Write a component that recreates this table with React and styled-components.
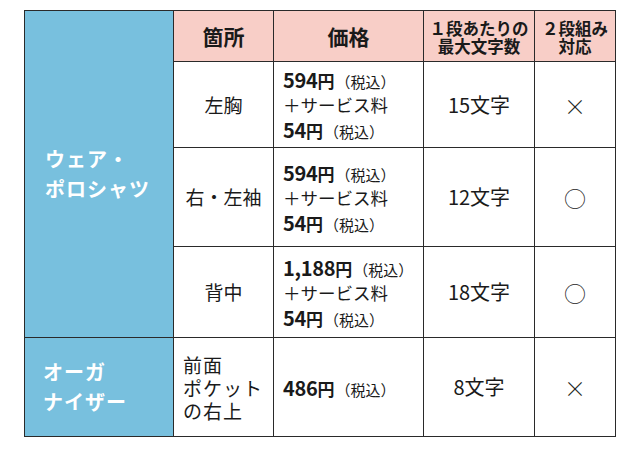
import React from "react";
import styled, { createGlobalStyle } from "styled-components";

const Global = createGlobalStyle`
  html, body { margin: 0; padding: 0; background: #fff; }
  body { font-family: "Noto Sans CJK JP", "Noto Sans", sans-serif; color: #1a1a1a; }
`;

const Page = styled.div`
  padding: 10px 0 0 24px;
`;

const Table = styled.div`
  display: grid;
  width: max-content;
  grid-template-columns: 148px 99px 149px 110px 80px;
  grid-template-rows: 50px 85px 98px 90px 98px;
  gap: 1px;
  padding: 1px;
  background: #2a2a2a;
`;

const GroupCell = styled.div`
  grid-column: 1;
  grid-row: ${(p) => p.$rows};
  background: #78c0de;
  color: #fff;
  font-weight: 700;
  font-size: 20px;
  line-height: 30px;
  letter-spacing: 1px;
  display: flex;
  flex-direction: column;
  justify-content: center;
  padding-left: ${(p) => p.$pad}px;
`;

const HeaderCell = styled.div`
  background: #f8cec7;
  display: flex;
  flex-direction: column;
  align-items: center;
  justify-content: center;
  font-weight: 700;
  font-size: ${(p) => (p.$small ? 16.5 : 21)}px;
  line-height: ${(p) => (p.$small ? "18px" : "24px")};
  color: #1a1a1a;
  text-align: center;
  white-space: nowrap;
  padding-top: ${(p) => (p.$small ? 1 : 0)}px;
`;

const Cell = styled.div`
  background: #fff;
  display: flex;
  flex-direction: column;
  justify-content: center;
  align-items: ${(p) => (p.$left ? "flex-start" : "center")};
  padding-left: ${(p) => (p.$left ? 9 : 0)}px;
  font-size: ${(p) => p.$size || 20}px;
  line-height: ${(p) => p.$lh || 24}px;
  white-space: nowrap;
`;

const PlaceText = styled.span`
  font-size: 19px;
  line-height: 23px;
  letter-spacing: 1px;
`;

const PriceLine = styled.div`
  display: flex;
  align-items: baseline;
  height: 25px;
  line-height: 25px;
`;

const Amount = styled.span`
  font-weight: 700;
  font-size: 20px;
  letter-spacing: -0.3px;
`;

const Yen = styled.span`
  font-weight: 700;
  font-size: 17px;
`;

const Tax = styled.span`
  font-size: 15px;
  margin-left: 1px;
`;

const Service = styled.span`
  font-size: 17.5px;
`;

const Mark = styled.span`
  font-size: 22px;
  font-weight: 300;
  color: #222;
`;

const Price = ({ amount }) => (
  <PriceLine>
    <Amount>{amount}</Amount>
    <Yen>円</Yen>
    <Tax>（税込）</Tax>
  </PriceLine>
);

const PriceBlock = ({ amount }) => (
  <>
    <Price amount={amount} />
    <PriceLine>
      <Service>＋サービス料</Service>
    </PriceLine>
    <Price amount="54" />
  </>
);

const rows = [
  { place: "左胸", price: "594", chars: "15文字", mark: "×" },
  { place: "右・左袖", price: "594", chars: "12文字", mark: "○" },
  { place: "背中", price: "1,188", chars: "18文字", mark: "○" },
];

export default function App() {
  return (
    <>
      <Global />
      <Page>
        <Table>
          <GroupCell $rows="1 / span 4" $pad={20}>
            <span>ウェア・</span>
            <span>ポロシャツ</span>
          </GroupCell>
          <HeaderCell>箇所</HeaderCell>
          <HeaderCell>価格</HeaderCell>
          <HeaderCell $small>
            <span>１段あたりの</span>
            <span>最大文字数</span>
          </HeaderCell>
          <HeaderCell $small>
            <span>２段組み</span>
            <span>対応</span>
          </HeaderCell>

          {rows.map((r) => (
            <React.Fragment key={r.place}>
              <Cell $size={19}>{r.place}</Cell>
              <Cell $left>
                <PriceBlock amount={r.price} />
              </Cell>
              <Cell>{r.chars}</Cell>
              <Cell>
                <Mark>{r.mark}</Mark>
              </Cell>
            </React.Fragment>
          ))}

          <GroupCell $rows="5" $pad={18}>
            <span>オーガ</span>
            <span>ナイザー</span>
          </GroupCell>
          <Cell $left>
            <PlaceText>前面</PlaceText>
            <PlaceText>ポケット</PlaceText>
            <PlaceText>の右上</PlaceText>
          </Cell>
          <Cell $left>
            <Price amount="486" />
          </Cell>
          <Cell>8文字</Cell>
          <Cell>
            <Mark>×</Mark>
          </Cell>
        </Table>
      </Page>
    </>
  );
}
